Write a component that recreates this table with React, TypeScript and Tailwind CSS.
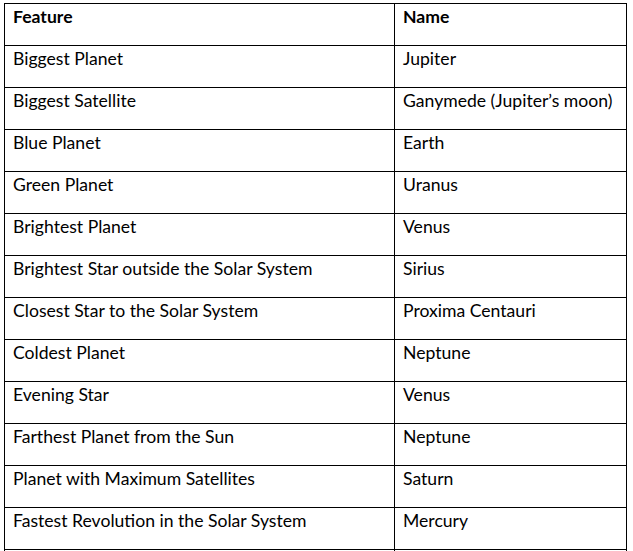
const rows: [string, string][] = [
  ["Biggest Planet", "Jupiter"],
  ["Biggest Satellite", "Ganymede (Jupiter’s moon)"],
  ["Blue Planet", "Earth"],
  ["Green Planet", "Uranus"],
  ["Brightest Planet", "Venus"],
  ["Brightest Star outside the Solar System", "Sirius"],
  ["Closest Star to the Solar System", "Proxima Centauri"],
  ["Coldest Planet", "Neptune"],
  ["Evening Star", "Venus"],
  ["Farthest Planet from the Sun", "Neptune"],
  ["Planet with Maximum Satellites", "Saturn"],
  ["Fastest Revolution in the Solar System", "Mercury"],
  ["", ""],
];

export default function App() {
  return (
    <div className="w-[633px] h-[551px] overflow-hidden bg-white pt-[3px] pl-[4px]">
      <table
        className="border-collapse text-black text-[17.6px] leading-[20px]"
        style={{ fontFamily: "Lato, 'Liberation Sans', sans-serif" }}
      >
        <thead>
          <tr>
            <th className="w-[390px] h-[42px] border border-black text-left align-top font-bold pt-[3px] pl-[8px]">
              Feature
            </th>
            <th className="w-[232px] h-[42px] border border-black text-left align-top font-bold pt-[3px] pl-[8px]">
              Name
            </th>
          </tr>
        </thead>
        <tbody>
          {rows.map(([feature, name], i) => (
            <tr key={i}>
              <td className="h-[42px] border border-black align-top pt-[3px] pl-[8px]">{feature}</td>
              <td className="h-[42px] border border-black align-top pt-[3px] pl-[8px]">{name}</td>
            </tr>
          ))}
        </tbody>
      </table>
    </div>
  );
}
